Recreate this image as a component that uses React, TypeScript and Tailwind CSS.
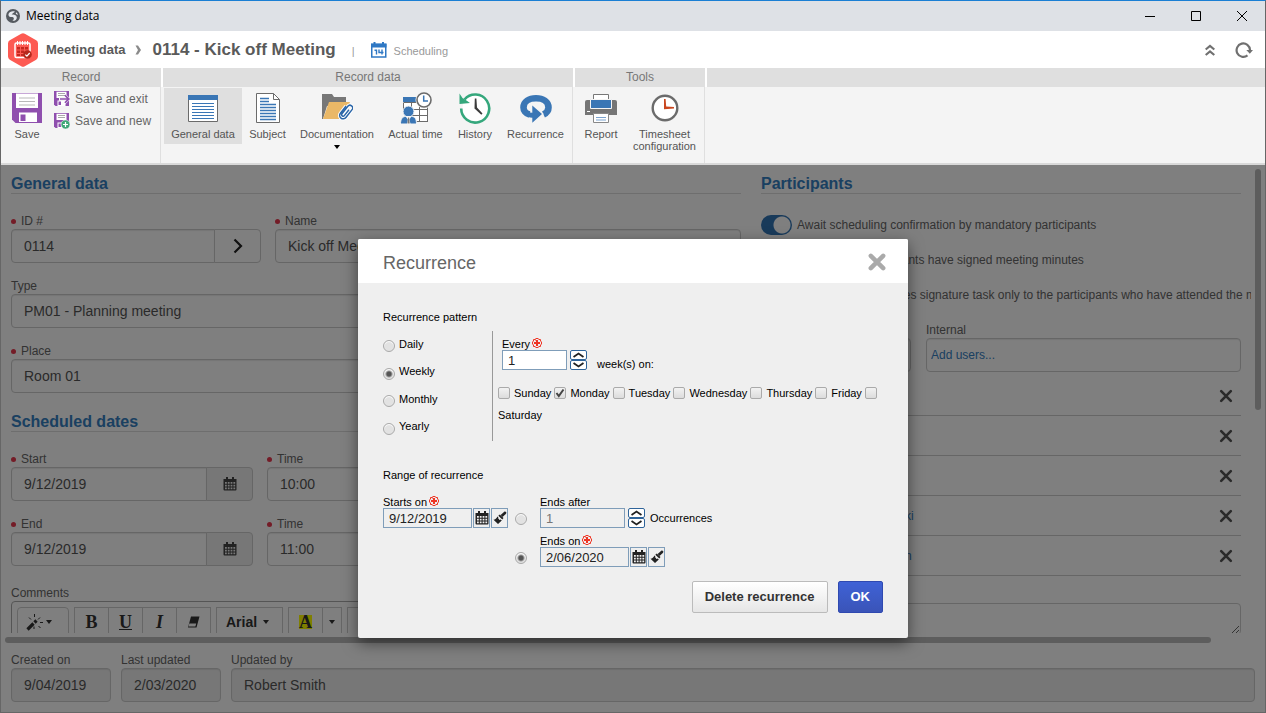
import type { FC, ReactNode } from "react";
import clsx from "clsx";

const users = [
  "Robert Smith",
  "Emily Carter",
  "Daniel Moore",
  "Christopher Kowalski",
  "Kimberly Richardson",
];

const weekdays = ["Sunday", "Monday", "Tuesday", "Wednesday", "Thursday", "Friday", "Saturday"];

const patterns = ["Daily", "Weekly", "Monthly", "Yearly"];

/* ---------- Icons ---------- */

const GlobeIcon: FC = () => (
  <svg className="size-[14px]" viewBox="0 0 14 14">
    <circle cx="7" cy="7" r="7" fill="#555a60" />
    <path
      d="M2.500 5C3.500 2.800 6.500 1.600 9 2.800L6.800 4.200 5.600 5.800c2-.6 5 .2 5.200 2.600.2 2-1.800 3.600-4.400 3.400 1.400-1 1.800-2 1.200-3-.6-.8-1.800-.8-3-.8C3 7.800 2.200 6.500 2.500 5z"
      fill="#e6e9ee"
    />
    <path d="M10 3.200c1 .6 1.800 1.600 2 2.600L9.800 5z" fill="#e6e9ee" />
  </svg>
);

const LogoIcon: FC = () => (
  <svg className="h-[34px] w-[30px]" viewBox="0 0 30 34">
    <path
      d="M13.200.8a3.600 3.600 0 0 1 3.600 0l11.400 6.500a3.600 3.600 0 0 1 1.800 3.100v13.200a3.600 3.600 0 0 1-1.800 3.100l-11.400 6.500a3.600 3.600 0 0 1-3.600 0L1.800 26.700A3.600 3.600 0 0 1 0 23.600V10.400a3.600 3.600 0 0 1 1.800-3.100z"
      fill="#fd5a52"
    />
    <rect x="7" y="10" width="15" height="14.500" rx="1.500" fill="none" stroke="#fff" strokeWidth="1.500" />
    <path d="M9.500 8v4M12 8v4M14.500 8v4M17 8v4M19.500 8v4" stroke="#fff" strokeWidth="1" />
    <path
      d="M9 14h3v2.500H9zM13 14h3v2.500h-3zM17 14h3v2.500h-3zM9 17.500h3V20H9zM13 17.500h3V20h-3zM9 21h3v2H9zM13 21h3v2h-3z"
      fill="#c5281f"
    />
    <circle cx="19.500" cy="21.500" r="4.300" fill="#b5291c" />
    <path d="M17.300 21.600l1.600 1.600 2.800-3.200" fill="none" stroke="#fff" strokeWidth="1.200" />
  </svg>
);

const ScheduleIcon: FC = () => (
  <svg className="size-4" viewBox="0 0 16 16">
    <rect x=".75" y="2.500" width="14" height="12.500" fill="#fff" stroke="#2f78c4" strokeWidth="1.500" />
    <path d="M0 1.500h15.500v4H0z" fill="#2f78c4" />
    <path d="M2.500 0h2v3h-2zM11 0h2v3h-2z" fill="#2f78c4" />
    <path d="M3.500 8.200h2v4.300M8 7.500v3h4.500M11 7.500v5" fill="none" stroke="#2f78c4" strokeWidth="1.400" />
  </svg>
);

const FloppyIcon: FC = () => (
  <svg className="h-8 w-[30px]" viewBox="0 0 30 32">
    <path d="M0 1h30v30H3.500L0 27.500z" fill="#8f4fae" />
    <path d="M4 1.500h22v14.500H4zM7 20.500h18V30H7z" fill="#fff" />
    <path d="M7 6h16M7 9.500h16M7 13h16" stroke="#b9b9b9" />
    <path d="M8.500 22.500h5v6.500h-5z" fill="#8f4fae" />
  </svg>
);

const SmallFloppyIcon: FC<{ variant: "exit" | "new" }> = ({ variant }) => (
  <svg className="size-4" viewBox="0 0 16 16">
    <path d="M0 0h15v15H1.500L0 13.500z" fill="#8f4fae" />
    <path d="M2.500.8h10V7h-10zM3.500 9.500h8V15h-8z" fill="#fff" />
    <path d="M4 2.500h7M4 4.500h7" stroke="#aaa" />
    <path d="M4.500 10.500H7V14H4.500z" fill="#8f4fae" />
    {variant === "exit" ? (
      <>
        <path d="M5 6h6V2.500L16.500 8 11 13.500V10H5z" fill="#f4f4f4" />
        <path d="M6 7.200h6.800L10.300 4.700l1.200-1L16 8l-4.500 4.300-1.200-1 2.500-2.500H6z" fill="#8f4fae" />
      </>
    ) : (
      <>
        <circle cx="11.500" cy="11.500" r="4.500" fill="#3fa777" stroke="#f4f4f4" strokeWidth=".6" />
        <path d="M11.500 9v5M9 11.500h5" stroke="#fff" strokeWidth="1.200" />
      </>
    )}
  </svg>
);

const GeneralDataIcon: FC = () => (
  <svg className="size-8" viewBox="0 0 32 32">
    <path d="M1.500 3.500h29v26h-29z" fill="#fff" stroke="#6b6b6b" />
    <path d="M1 3h30v5H1z" fill="#3a76b5" />
    <path d="M5 11.500h22M5 14.500h22M5 17.500h22M5 20.500h22M5 23.500h22M5 26.500h22" stroke="#3a76b5" />
  </svg>
);

const SubjectIcon: FC = () => (
  <svg className="size-8" viewBox="0 0 32 32">
    <path d="M4.500 1.500h17l6 6v23h-23z" fill="#fff" stroke="#6b6b6b" />
    <path d="M21.500 1.500v6h6" fill="none" stroke="#6b6b6b" />
    <path
      d="M8 6.500h9M8 9.500h9M8 12.500h16M8 15.500h16M8 18.500h16M8 21.500h16M8 24.500h16M8 27.500h16"
      stroke="#3a76b5"
      strokeWidth="1.300"
    />
  </svg>
);

const DocumentationIcon: FC = () => (
  <svg className="size-8" viewBox="0 0 32 32">
    <path d="M1 2h10l2 3h12v9H6L2 27H1z" fill="#777" />
    <path d="M8 10h21l-6 17H2z" fill="#eab867" />
    <g transform="rotate(38 24 21)" fill="none">
      <path
        d="M20.500 15v9a3.500 3.500 0 0 0 7 0V14a2.700 2.700 0 0 0-5.400 0v9.500a1.500 1.500 0 0 0 3 0V16"
        stroke="#fff"
        strokeWidth="3.400"
      />
      <path
        d="M20.500 15v9a3.500 3.500 0 0 0 7 0V14a2.700 2.700 0 0 0-5.400 0v9.500a1.500 1.500 0 0 0 3 0V16"
        stroke="#2b66a8"
        strokeWidth="1.500"
      />
    </g>
  </svg>
);

const ActualTimeIcon: FC = () => (
  <svg className="size-8" viewBox="0 0 32 32">
    <path d="M3.500 5.500h24v24h-24z" fill="#fff" />
    <path
      d="M3.500 10.500v7M11.500 10v20M19.500 10v20M27.500 14v16M3.500 17.500h24M11 23.500h17M11 29.500h17M4 10.500h24"
      stroke="#6b6b6b"
      fill="none"
    />
    <path d="M3 5h15v5H3z" fill="#3a76b5" />
    <circle cx="24" cy="8" r="8.500" fill="#f4f4f4" />
    <circle cx="24" cy="8" r="7" fill="#fff" stroke="#6b6b6b" strokeWidth="1.600" />
    <path d="M23.700 3.500V9H28" fill="none" stroke="#3a76b5" strokeWidth="1.500" />
    <circle cx="8.500" cy="19.500" r="5.500" fill="#3a76b5" stroke="#f4f4f4" />
    <path d="M.5 32c0-5 2-7.500 5-7.500h6c3.500 0 5 2.500 5 7.500z" fill="#3a76b5" stroke="#f4f4f4" />
    <path d="M6 25h5l-1.500 2.500 1 4.500H7l.8-4.500z" fill="#fff" />
    <path d="M7.900 25.500h1.300l.5 6H7.500z" fill="#777" />
  </svg>
);

const HistoryIcon: FC = () => (
  <svg className="size-8" viewBox="0 0 32 32">
    <circle cx="16.500" cy="16" r="13" fill="#fff" />
    <path d="M5.500 7.500A14 14 0 1 1 2.200 16.500" fill="none" stroke="#35a77c" strokeWidth="2.600" />
    <path d="M.5 1.500v10.500l10.500-1L7.500 8.500 3.500 6z" fill="#35a77c" />
    <path d="M15.800 6.500h1.600l.6 9 5.500 6-1.200 1.200-6.800-6.200z" fill="#3c3c3c" />
  </svg>
);

const RecurrenceIcon: FC = () => (
  <svg className="size-8" viewBox="0 0 32 32">
    <path
      d="M9.500 22.500C5.500 21.500 3.500 18.500 3.500 15.500 3.500 9.500 9 6.300 16 6.300s12.500 3.200 12.500 9.200c0 3-1.500 5.300-5 7"
      fill="none"
      stroke="#3a76b5"
      strokeWidth="6.600"
    />
    <path d="M11.300 11l12.500 11-12.500 10.500z" fill="#f4f4f4" />
    <path d="M12.300 13.500L22 22l-9.700 8.700v-5c-1.500 0-3-.3-4.500-1v-5c1.500.7 3 1 4.500 1z" fill="#3a76b5" />
  </svg>
);

const ReportIcon: FC = () => (
  <svg className="size-8" viewBox="0 0 32 32">
    <path d="M8.500 2.500h15v9h-15z" fill="#fff" stroke="#777" />
    <path d="M2 8h28a2 2 0 0 1 2 2v13H0V10a2 2 0 0 1 2-2z" fill="#757575" />
    <path d="M5.500 7.500h21v9h-21z" fill="#3a76b5" stroke="#f4f4f4" />
    <path d="M2 19.500h3" stroke="#fff" />
    <path d="M8.500 21.500h15v9h-15z" fill="#fff" stroke="#888" />
    <path d="M11 25.500h10M11 28h10" stroke="#7ba3cf" />
  </svg>
);

const TimesheetIcon: FC = () => (
  <svg className="size-8" viewBox="0 0 32 32">
    <circle cx="16" cy="16" r="12.300" fill="#fff" stroke="#6b6b6b" strokeWidth="2.400" />
    <path d="M15 7h1.600l.6 7.500L25 15v1.500l-10 .8z" fill="#c9471f" />
  </svg>
);

const CalendarIcon: FC = () => (
  <svg className="size-[14px]" viewBox="0 0 14 14">
    <path d="M.5 2h13v10.500a1 1 0 0 1-1 1h-11a1 1 0 0 1-1-1z" fill="currentColor" />
    <path d="M3 0h2v3H3zM9 0h2v3H9z" fill="currentColor" />
    <path
      d="M2 5h1.800v1.800H2zM4.800 5h1.800v1.800H4.800zM7.600 5h1.800v1.800H7.600zM10.400 5h1.800v1.800h-1.800zM2 7.800h1.800v1.800H2zM4.800 7.800h1.800v1.800H4.800zM7.600 7.800h1.800v1.800H7.600zM10.400 7.800h1.800v1.800h-1.800zM2 10.600h1.800v1.600H2zM4.800 10.600h1.800v1.600H4.800zM7.600 10.600h1.800v1.600H7.600zM10.400 10.600h1.800v1.600h-1.800z"
      fill="#efefef"
    />
  </svg>
);

const BrushIcon: FC = () => (
  <svg className="size-[14px]" viewBox="0 0 14 14">
    <path d="M11 1l1-.8 1.500 1.500-.7 1.300-3.300 3L7.600 4z" fill="#222" />
    <path d="M6.800 3.500l3.700 3.500-1.200 1.500-4-3.800z" fill="#222" />
    <path d="M4.500 5.500l4.300 4L5 13 .5 8.800c1.800-.3 3-1.300 4-3.300z" fill="#222" />
    <path d="M5 6.800c1.300 0 2 .9 1.900 2.200" stroke="#efefef" strokeWidth="1.300" fill="none" />
  </svg>
);

const RequiredMark: FC = () => (
  <svg className="mb-[2px] size-[10px]" viewBox="0 0 10 10" fill="none" stroke="#ee3524">
    <path d="M3.500.5h3M3.500 9.500h3M.5 3.500v3M9.500 3.500v3M1.500 1.500h2v1M8.500 1.500h-2M1.500 8.500h2M8.500 8.500h-2M1.500 1.500v2M8.500 1.500v2M1.500 8.500v-2M8.500 8.500v-2" />
    <path d="M5 2v6M2 5h6" strokeWidth="2" />
  </svg>
);

const CrossIcon: FC<{ className: string; width: number }> = ({ className, width }) => (
  <svg className={className} viewBox="0 0 16 16">
    <path d="M2.500 2.500l11 11M13.500 2.500l-11 11" stroke="currentColor" strokeWidth={width} strokeLinecap="round" />
  </svg>
);

const Caret: FC = () => (
  <svg className="h-1 w-[6px]" viewBox="0 0 6 4">
    <path d="M0 0h6L3 4z" fill="currentColor" />
  </svg>
);

/* ---------- Record form ---------- */

const inputClass =
  "h-[34px] w-full min-w-0 border border-[#ccc] px-3 text-[14px] text-[#555] shadow-[inset_0_1px_1px_rgba(0,0,0,0.08)]";

const labelClass = "flex h-[18px] items-center pt-0.5 text-[12px] text-[#666]";

interface FieldProps {
  id: string;
  label: string;
  value: string;
  required?: boolean;
  disabled?: boolean;
  className?: string;
  addon?: ReactNode;
}

const Field: FC<FieldProps> = ({ id, label, value, required, disabled, className, addon }) => (
  <div className={className}>
    <label htmlFor={id} className={labelClass}>
      {required && <span className="mr-[5px] size-[5px] rounded-full bg-[#e8384f]" />}
      {label}
    </label>
    <div className="flex">
      <input
        id={id}
        defaultValue={value}
        readOnly={disabled}
        className={clsx(inputClass, addon ? "rounded-l" : "rounded", disabled ? "bg-[#eee]" : "bg-white")}
      />
      {addon}
    </div>
  </div>
);

const CalendarAddon: FC = () => (
  <button
    aria-label="Open calendar"
    className="-ml-px flex w-[47px] shrink-0 items-center justify-center rounded-r border border-[#ccc] bg-[#eee] text-[#444]"
  >
    <CalendarIcon />
  </button>
);

const SectionTitle: FC<{ children: ReactNode }> = ({ children }) => (
  <h2 className="mb-[17px] h-5 border-b border-[#ddd] text-[16px] leading-[19px] font-bold text-[#3580c2]">
    {children}
  </h2>
);

const Toggle: FC<{ label: string }> = ({ label }) => (
  <label className="flex h-[35px] items-center gap-[5px] text-[12px] whitespace-nowrap text-[#666]">
    <input
      type="checkbox"
      defaultChecked
      className="h-5 w-[31px] shrink-0 appearance-none rounded-full bg-[#3174b5] bg-[radial-gradient(circle_at_21px_10px,#fff_8px,transparent_9px)]"
    />
    {label}
  </label>
);

const toolButton = "flex h-[30px] items-center justify-center border border-[#ccc] bg-white text-[#333]";

const CommentsEditor: FC = () => (
  <div>
    <div className={labelClass}>Comments</div>
    <div className="flex h-20 items-start gap-[5px] overflow-hidden rounded border border-[#aaa] p-[5px]">
      <button aria-label="Style" className={clsx(toolButton, "w-[52px] gap-0.5 rounded-t pr-2")}>
        <svg className="size-[18px]" viewBox="0 0 18 18" stroke="currentColor" fill="none">
          <path d="M1.500 16.500l6-6" strokeWidth="3.200" />
          <path d="M8.500 9.500l2-2" strokeWidth="3.200" />
          <path d="M3 4.500l2 2M8.500 1v3M14 4.500l-2 2M14 9.500h3M12.500 13l2 2M8 13.500V16" strokeWidth="1" />
        </svg>
        <Caret />
      </button>
      <div className="flex font-['Liberation_Serif',serif] text-[18px] font-bold">
        <button className={clsx(toolButton, "w-[35px]")}>B</button>
        <button className={clsx(toolButton, "-ml-px w-[35px] underline")}>U</button>
        <button className={clsx(toolButton, "-ml-px w-[35px] italic")}>I</button>
        <button aria-label="Clear formatting" className={clsx(toolButton, "-ml-px w-[35px]")}>
          <svg className="h-3 w-[13px]" viewBox="0 0 13 12">
            <path d="M4 .5h8.500l-3 11H1z" fill="currentColor" />
            <path d="M2.300 7.500h6.900l-.8 3H1.600z" fill="#fff" />
          </svg>
        </button>
      </div>
      <button className={clsx(toolButton, "w-[67px] gap-[6px] pr-1 text-[14px] font-bold")}>
        Arial
        <Caret />
      </button>
      <div className="flex">
        <button className={clsx(toolButton, "w-[35px] font-['Liberation_Serif',serif] text-[18px] font-bold")}>
          <span className="block h-[14px] bg-[#ff0] leading-[14px]">A</span>
        </button>
        <button aria-label="More colors" className={clsx(toolButton, "-ml-px w-5")}>
          <Caret />
        </button>
      </div>
      <button aria-label="List" className={clsx(toolButton, "w-[35px]")} />
    </div>
  </div>
);

const RecordForm: FC = () => (
  <section className="flex min-w-0 flex-col pt-[9px]">
    <SectionTitle>General data</SectionTitle>
    <div className="flex flex-col gap-[13px]">
      <div className="flex gap-[14px]">
        <Field
          id="record-id"
          label="ID #"
          value="0114"
          required
          className="w-[250px] shrink-0"
          addon={
            <button
              aria-label="Next ID"
              className="-ml-px flex w-[47px] shrink-0 items-center justify-center rounded-r border border-[#ccc] bg-white"
            >
              <svg className="h-4 w-[10px]" viewBox="0 0 10 16">
                <path d="M1.500 1.500L8 8l-6.500 6.500" fill="none" stroke="#222" strokeWidth="2.200" />
              </svg>
            </button>
          }
        />
        <Field id="record-name" label="Name" value="Kick off Meeting" required className="flex-1" />
      </div>
      <Field id="type" label="Type" value="PM01 - Planning meeting" />
      <Field id="place" label="Place" value="Room 01" required />
    </div>
    <div className="h-[19px]" />
    <SectionTitle>Scheduled dates</SectionTitle>
    <div className="mb-[17px] flex flex-col gap-[13px]">
      <div className="flex gap-[14px]">
        <Field id="start" label="Start" value="9/12/2019" required className="w-[242px]" addon={<CalendarAddon />} />
        <Field id="start-time" label="Time" value="10:00" required className="w-[242px]" />
      </div>
      <div className="flex gap-[14px]">
        <Field id="end" label="End" value="9/12/2019" required className="w-[242px]" addon={<CalendarAddon />} />
        <Field id="end-time" label="Time" value="11:00" required className="w-[242px]" />
      </div>
    </div>
    <CommentsEditor />
  </section>
);

const Participants: FC = () => (
  <section className="flex min-w-0 flex-col pt-[9px]">
    <SectionTitle>Participants</SectionTitle>
    <div className="-mt-1 mb-2">
      <Toggle label="Await scheduling confirmation by mandatory participants" />
      <Toggle label="Close when participants have signed meeting minutes" />
      <Toggle label="Send meeting minutes signature task only to the participants who have attended the meeting" />
    </div>
    <div className="flex gap-[15px]">
      <Field id="external" label="External" value="" className="w-[150px]" />
      <div className="flex-1">
        <label htmlFor="internal" className={labelClass}>
          Internal
        </label>
        <input
          id="internal"
          placeholder="Add users..."
          className="h-[34px] w-full rounded border border-[#ccc] bg-white px-1 text-[12px] shadow-[inset_0_1px_1px_rgba(0,0,0,0.08)] placeholder:text-[#3580c2]"
        />
      </div>
    </div>
    <ul className="mt-1 text-[12px]">
      {users.map((user) => (
        <li key={user} className="flex h-10 items-center gap-3 border-b border-[#ccc] pr-2">
          <span className="size-7 rounded-full bg-[#ccd6e0]" />
          <a href="#" className="text-[#3580c2]">
            {user}
          </a>
          <button aria-label={`Remove ${user}`} className="ml-auto text-[#555]">
            <CrossIcon className="size-[14px]" width={3} />
          </button>
        </li>
      ))}
    </ul>
    <textarea aria-label="Notes" className="mt-[27px] h-8 shrink-0 resize rounded border border-[#ccc] bg-white" />
  </section>
);

/* ---------- Recurrence dialog ---------- */

const radioClass =
  "size-3 shrink-0 appearance-none rounded-full border border-[#aaa] bg-[#e2e2e2] shadow-[inset_0_1px_1px_#fff] checked:bg-[radial-gradient(circle,#555_2px,#e2e2e2_4px)]";

const boxButton = "flex h-5 w-[17px] items-center justify-center border border-[#7f9db9] text-[#222]";

const Spinner: FC = () => (
  <div className="ml-[3px] flex h-5 w-[17px] flex-col">
    {["M.5 5L5.500 1.500 10.500 5", "M.5 1L5.500 4.500 10.500 1"].map((d, index) => (
      <button
        key={d}
        aria-label={index === 0 ? "Increase" : "Decrease"}
        className="flex flex-1 items-center justify-center rounded-xs border border-[#2f649a] bg-white"
      >
        <svg className="h-[6px] w-[11px]" viewBox="0 0 11 6">
          <path d={d} fill="none" stroke="#222" strokeWidth="1.800" />
        </svg>
      </button>
    ))}
  </div>
);

const DateButtons: FC = () => (
  <>
    <button aria-label="Pick date" className={clsx(boxButton, "ml-px")}>
      <CalendarIcon />
    </button>
    <button aria-label="Clear date" className={clsx(boxButton, "ml-px")}>
      <BrushIcon />
    </button>
  </>
);

const dialogInput = "h-5 border border-[#7f9db9] px-[5px] text-[13px] text-[#222]";
const dialogLabel = "flex h-3 items-center gap-0.5 leading-3";

const RecurrenceDialog: FC = () => (
  <div
    role="dialog"
    aria-label="Recurrence"
    className="w-[550px] overflow-hidden rounded-xs bg-[#efefef] text-[11px] text-black shadow-[0_5px_15px_rgba(0,0,0,0.5)]"
  >
    <div className="flex h-11 items-center justify-between bg-white pr-[22px] pl-[25px]">
      <h1 className="pt-1 text-[18px] text-[#666]">Recurrence</h1>
      <button aria-label="Close" className="pt-0.5 text-[#aaa]">
        <CrossIcon className="size-[18px]" width={4} />
      </button>
    </div>
    <div className="px-[25px] pt-7 pb-[25px]">
      <h3 className="leading-3">Recurrence pattern</h3>
      <div className="mt-2 flex h-[110px]">
        <div className="flex w-[110px] shrink-0 flex-col border-r border-[#999]">
          {patterns.map((pattern) => (
            <label key={pattern} className="flex flex-1 items-center gap-1">
              <input
                type="radio"
                name="pattern"
                defaultChecked={pattern === "Weekly"}
                className={clsx(radioClass, "mt-[3px]")}
              />
              <span className="pb-0.5">{pattern}</span>
            </label>
          ))}
        </div>
        <div className="min-w-0 flex-1 pt-[7px] pl-[5px]">
          <div className="flex items-end pl-1">
            <div>
              <label htmlFor="every" className={dialogLabel}>
                Every <RequiredMark />
              </label>
              <input id="every" defaultValue="1" className={clsx(dialogInput, "w-[65px] bg-white")} />
            </div>
            <Spinner />
            <span className="ml-[10px] leading-3">week(s) on:</span>
          </div>
          <div className="mt-3 leading-[22px]">
            {weekdays.map((day) => (
              <label key={day}>
                <span className="relative mr-1 inline-block size-3 align-[-2px]">
                  <input
                    type="checkbox"
                    defaultChecked={day === "Monday"}
                    className="peer block size-3 appearance-none rounded-xs border border-[#aaa] bg-linear-to-b from-[#f2f2f2] to-[#dcdcdc]"
                  />
                  <svg className="absolute inset-0 hidden size-3 peer-checked:block" viewBox="0 0 12 12">
                    <path d="M2.500 6l2.300 3L9.500 2.500" fill="none" stroke="#444" strokeWidth="2" />
                  </svg>
                </span>
                {day}{" "}
              </label>
            ))}
          </div>
        </div>
      </div>
      <h3 className="mt-7 leading-3">Range of recurrence</h3>
      <div className="mt-[15px] flex">
        <div>
          <label htmlFor="starts-on" className={dialogLabel}>
            Starts on <RequiredMark />
          </label>
          <div className="flex">
            <input id="starts-on" defaultValue="9/12/2019" className={clsx(dialogInput, "w-[89px]")} />
            <DateButtons />
          </div>
        </div>
        <div className="ml-[7px] grid grid-cols-[auto_auto] gap-x-[13px] gap-y-[7px]">
          <input type="radio" name="range" aria-label="Ends after" className={clsx(radioClass, "mt-[17px]")} />
          <div>
            <label htmlFor="ends-after" className={dialogLabel}>
              Ends after
            </label>
            <div className="flex items-center">
              <input id="ends-after" defaultValue="1" className={clsx(dialogInput, "w-[85px] text-[#777]")} />
              <Spinner />
              <span className="ml-[5px]">Occurrences</span>
            </div>
          </div>
          <input
            type="radio"
            name="range"
            aria-label="Ends on"
            defaultChecked
            className={clsx(radioClass, "mt-[17px]")}
          />
          <div>
            <label htmlFor="ends-on" className={dialogLabel}>
              Ends on <RequiredMark />
            </label>
            <div className="flex">
              <input id="ends-on" defaultValue="2/06/2020" className={clsx(dialogInput, "w-[89px]")} />
              <DateButtons />
            </div>
          </div>
        </div>
      </div>
      <div className="mt-[14px] flex justify-end gap-[10px] text-[13px] font-bold">
        <button className="h-8 rounded-xs border border-[#bbb] bg-linear-to-b from-white to-[#e6e6e6] px-3 text-[#333]">
          Delete recurrence
        </button>
        <button className="h-8 rounded-xs border border-[#2f49b0] bg-linear-to-b from-[#3f62d6] to-[#3a54b8] px-3 text-white">
          OK
        </button>
      </div>
    </div>
  </div>
);

/* ---------- Window chrome and ribbon ---------- */

const TitleBar: FC = () => (
  <div className="flex h-[30px] shrink-0 items-center bg-[#dee1e6] pl-[5px]">
    <GlobeIcon />
    <span className="ml-[6px] font-['Open_Sans','Noto_Sans',sans-serif] text-[12px] text-black">Meeting data</span>
    <div className="ml-auto flex">
      {["M0 5.500h10", "M.5.5h9v9h-9z", "M0 0l10 10M10 0L0 10"].map((d, index) => (
        <button
          key={d}
          aria-label={["Minimize", "Maximize", "Close"][index]}
          className="flex h-[30px] w-[46px] items-center justify-center"
        >
          <svg className="size-[10px]" viewBox="0 0 10 10">
            <path d={d} fill="none" stroke="#000" />
          </svg>
        </button>
      ))}
    </div>
  </div>
);

const Breadcrumb: FC = () => (
  <header className="flex h-[37px] shrink-0 items-center bg-white pr-3 pl-[7px] font-bold text-[#5a5a5a]">
    <LogoIcon />
    <span className="ml-2 text-[13px]">Meeting data</span>
    <svg className="mx-[10px] h-[10px] w-[7px]" viewBox="0 0 7 10">
      <path d="M.5.500h2.500L6 5 3 9.500H.5L3 5z" fill="#8a8a8a" />
    </svg>
    <span className="text-[17px]">0114 - Kick off Meeting</span>
    <span className="mx-4 pt-1 text-[11px] font-normal text-[#999]">|</span>
    <ScheduleIcon />
    <span className="ml-[7px] pt-1 text-[11px] font-normal text-[#999]">Scheduling</span>
    <div className="ml-auto flex items-center gap-5">
      <button aria-label="Collapse">
        <svg className="h-3 w-[10px]" viewBox="0 0 10 12">
          <path d="M.7 5.500L5 2l4.300 3.500M.7 11L5 7.500 9.300 11" fill="none" stroke="#707070" strokeWidth="2.200" />
        </svg>
      </button>
      <button aria-label="Refresh">
        <svg className="h-4 w-[18px]" viewBox="0 0 18 16">
          <path d="M12.500 13.400A6.700 6.700 0 1 1 15 8" fill="none" stroke="#707070" strokeWidth="2.200" />
          <path d="M11.300 8H18l-3.200 3.800z" fill="#707070" />
        </svg>
      </button>
    </div>
  </header>
);

const RibbonGroup: FC<{ title: string; className: string; children: ReactNode }> = ({ title, className, children }) => (
  <div className={clsx("flex shrink-0 flex-col", className)}>
    <div className="h-[19px] border-r-2 border-white bg-[#dfdfdf] text-center text-[12px] leading-[19px] text-[#777]">
      {title}
    </div>
    <div className="mr-0.5 flex flex-1 items-start border-r border-[#dfdfdf] pt-px">{children}</div>
  </div>
);

interface RibbonButtonProps {
  icon: ReactNode;
  label: string;
  className: string;
  menu?: boolean;
}

const RibbonButton: FC<RibbonButtonProps> = ({ icon, label, className, menu }) => (
  <button className={clsx("flex flex-col items-center py-1 text-[11px] leading-3 text-[#555]", className)}>
    {icon}
    <span className="mt-1">{label}</span>
    {menu && (
      <span className="mt-[5px] text-black">
        <Caret />
      </span>
    )}
  </button>
);

const Ribbon: FC = () => (
  <nav className="flex h-[97px] shrink-0 border-b-2 border-[#d9d9d9] bg-[#f4f4f4]">
    <RibbonGroup title="Record" className="w-[162px]">
      <RibbonButton icon={<FloppyIcon />} label="Save" className="w-[52px]" />
      <div className="ml-px flex flex-col text-[12px] text-[#666]">
        <button className="flex h-[22px] items-center gap-[5px]">
          <SmallFloppyIcon variant="exit" />
          Save and exit
        </button>
        <button className="flex h-[22px] items-center gap-[5px]">
          <SmallFloppyIcon variant="new" />
          Save and new
        </button>
      </div>
    </RibbonGroup>
    <RibbonGroup title="Record data" className="w-[412px]">
      <div className="flex items-start pl-px">
        <RibbonButton icon={<GeneralDataIcon />} label="General data" className="w-[78px] bg-[#dfdfdf]" />
        <RibbonButton icon={<SubjectIcon />} label="Subject" className="w-[51px]" />
        <RibbonButton icon={<DocumentationIcon />} label="Documentation" className="w-[88px]" menu />
        <RibbonButton icon={<ActualTimeIcon />} label="Actual time" className="w-[69px]" />
        <RibbonButton icon={<HistoryIcon />} label="History" className="w-[50px]" />
        <RibbonButton icon={<RecurrenceIcon />} label="Recurrence" className="w-[71px]" />
      </div>
    </RibbonGroup>
    <RibbonGroup title="Tools" className="w-[132px]">
      <RibbonButton icon={<ReportIcon />} label="Report" className="w-[52px]" />
      <RibbonButton icon={<TimesheetIcon />} label="Timesheet configuration" className="w-[75px]" />
    </RibbonGroup>
    <div className="h-[19px] flex-1 bg-[#dfdfdf]" />
  </nav>
);

export default function App() {
  return (
    <div className="flex h-screen flex-col overflow-hidden border border-t-[#1a7fd4] border-r-[#666] border-b-[#666] border-l-[#666] bg-white font-['Liberation_Sans',Arial,sans-serif]">
      <TitleBar />
      <Breadcrumb />
      <Ribbon />
      <main className="relative flex min-h-0 flex-1 flex-col">
        <div className="flex min-h-0 flex-1">
          <div className="grid min-w-0 flex-1 grid-cols-[73fr_48fr] gap-5 overflow-hidden pr-[10px] pl-[10px]">
            <RecordForm />
            <Participants />
          </div>
          <div className="w-[14px] pt-1 pl-1">
            <div className="h-[241px] w-[6px] rounded-full bg-[#bbb]" />
          </div>
        </div>
        <div className="mt-1 mr-[54px] ml-1 h-[6px] shrink-0 rounded-full bg-[#bbb]" />
        <div className="flex shrink-0 gap-[10px] px-[10px] pt-[7px] pb-[10px]">
          <Field id="created" label="Created on" value="9/04/2019" disabled className="w-[100px]" />
          <Field id="updated" label="Last updated" value="2/03/2020" disabled className="w-[100px]" />
          <Field id="updated-by" label="Updated by" value="Robert Smith" disabled className="flex-1" />
        </div>
        <div className="absolute inset-0 flex items-center justify-center bg-black/50">
          <RecurrenceDialog />
        </div>
      </main>
    </div>
  );
}
